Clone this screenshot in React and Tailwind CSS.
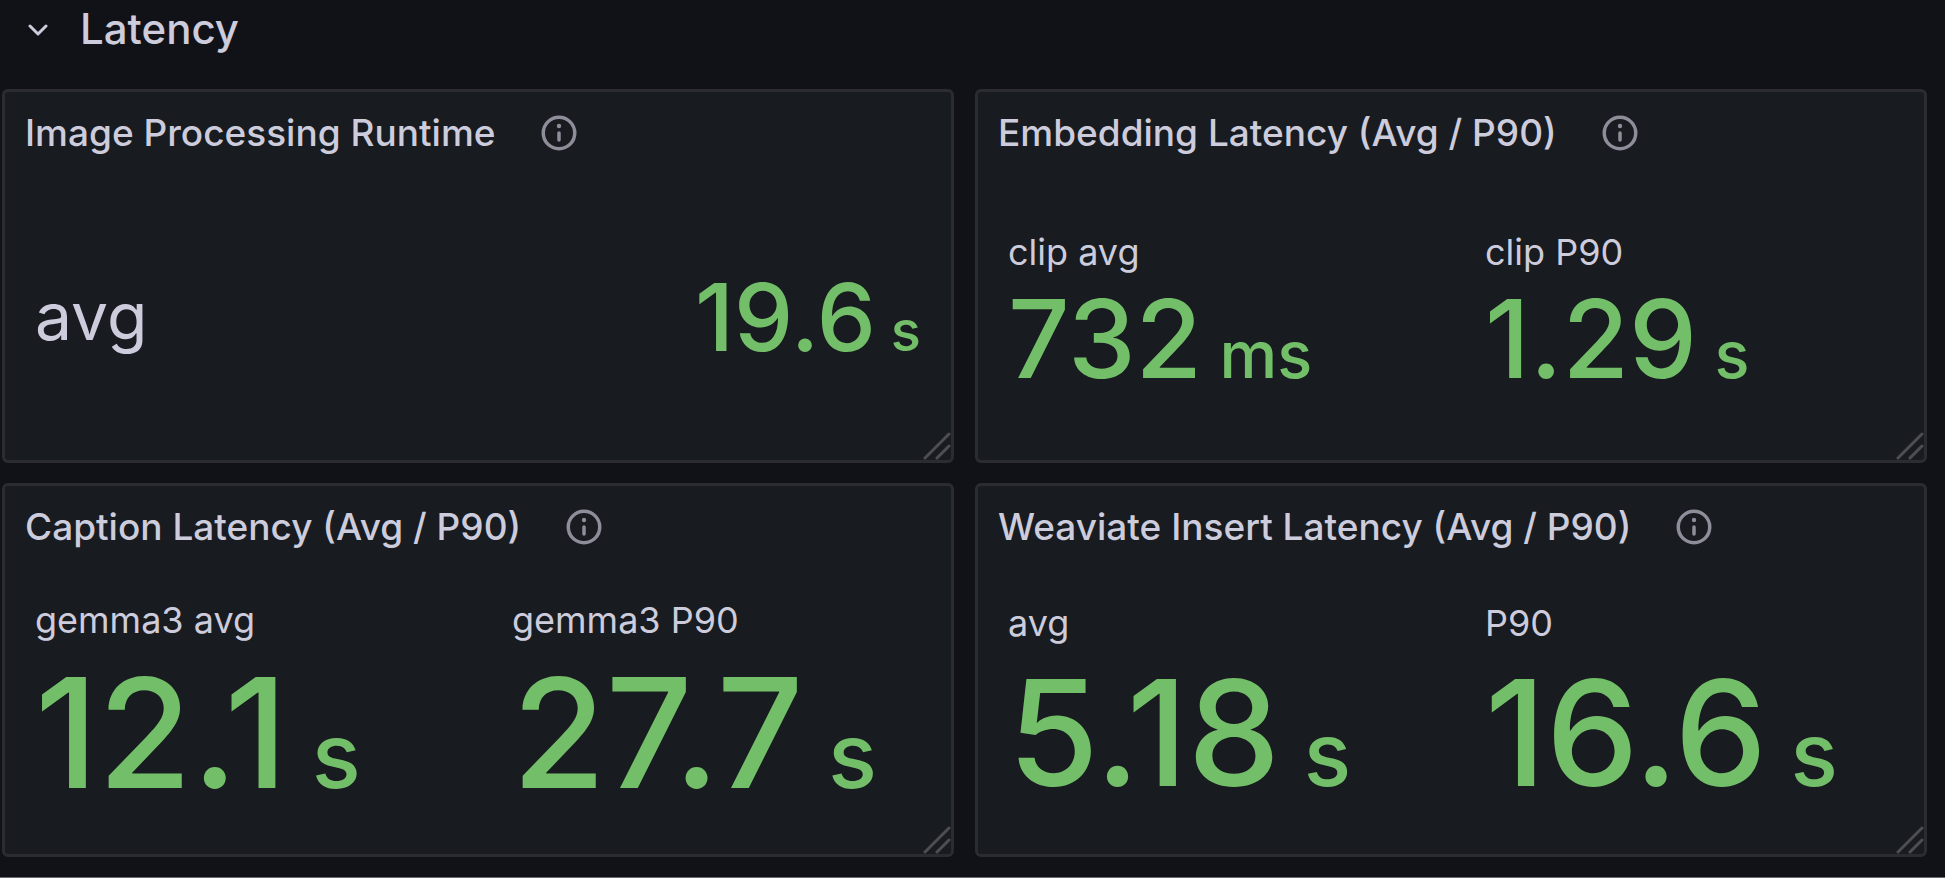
import React, { useState } from 'react'

const panels = [
    {
        title: "Image Processing Runtime",
        layout: "wide",
        stats: [{ label: "avg", value: "19.6", unit: "s" }],
    },
    {
        title: "Embedding Latency (Avg / P90)",
        valueSize: "text-[108px]",
        unitSize: "text-[65px]",
        stats: [
            { label: "clip avg", value: "732", unit: "ms" },
            { label: "clip P90", value: "1.29", unit: "s" },
        ],
    },
    {
        title: "Caption Latency (Avg / P90)",
        valueSize: "text-[152px]",
        unitSize: "text-[91px]",
        stats: [
            { label: "gemma3 avg", value: "12.1", unit: "s" },
            { label: "gemma3 P90", value: "27.7", unit: "s" },
        ],
    },
    {
        title: "Weaviate Insert Latency (Avg / P90)",
        valueSize: "text-[147px]",
        unitSize: "text-[88px]",
        stats: [
            { label: "avg", value: "5.18", unit: "s" },
            { label: "P90", value: "16.6", unit: "s" },
        ],
    },
];

const InfoIcon = () => (
    <svg viewBox="0 0 24 24" className="size-[42px]" fill="none" aria-hidden="true">
        <circle cx="12" cy="12" r="9" stroke="currentColor" strokeWidth="2" />
        <circle cx="12" cy="8" r="1.25" fill="currentColor" />
        <path d="M12 12v4" stroke="currentColor" strokeWidth="2" strokeLinecap="round" />
    </svg>
);

const ResizeHandle = () => (
    <svg viewBox="0 0 28 28" className="absolute right-0 bottom-0 size-7" fill="none" aria-hidden="true">
        <path d="M2 26L26 2M14 26L26 14" stroke="#4d4e53" strokeWidth="3" strokeLinecap="round" />
    </svg>
);

const StatValue = ({ value, unit, valueSize, unitSize }) => (
    <p className={`font-medium leading-[1.2] whitespace-pre text-[#73bf69] ${valueSize}`}>
        {value}
        <span className={`leading-none ${unitSize}`}>{` ${unit}`}</span>
    </p>
);

const Panel = ({ panel }) => {
    return (
        <section className="relative flex h-[374px] flex-col rounded-md border-3 border-[#2b2c31] bg-[#181b1f]">
            <header className="flex h-[82px] shrink-0 items-center gap-[42px] px-5">
                <h2 className="text-[37px] leading-[44px] font-medium whitespace-nowrap">{panel.title}</h2>
                <button type="button" aria-label={`About ${panel.title}`} className="text-[#8e8e9a]">
                    <InfoIcon />
                </button>
            </header>

            {panel.layout === "wide" ? (
                <div className="flex flex-1 items-center justify-between px-[30px]">
                    <p className="text-[66px] leading-[1.2]">{panel.stats[0].label}</p>
                    <StatValue {...panel.stats[0]} valueSize="text-[94px]" unitSize="text-[56px]" />
                </div>
            ) : (
                <div className="grid flex-1 grid-cols-2 content-center gap-x-[68px] px-[30px]">
                    {panel.stats.map((stat) => (
                        <div key={stat.label}>
                            <p className="text-[36px] leading-[44px]">{stat.label}</p>
                            <StatValue {...stat} valueSize={panel.valueSize} unitSize={panel.unitSize} />
                        </div>
                    ))}
                </div>
            )}
            <ResizeHandle />
        </section>
    );
};

const App = () => {
    const [open, setOpen] = useState(true);

    return (
        <main className="flex min-h-screen flex-col border-b border-[#6b6a70] bg-[#111217] font-[Inter,sans-serif] text-[#ccccdc]">
            <button
                type="button"
                aria-expanded={open}
                onClick={() => setOpen(!open)}
                className="mb-8 flex h-[57px] items-center gap-8 self-start pl-7 text-[42px] font-medium"
            >
                <svg viewBox="0 0 20 14" className={`h-[14px] w-5 ${open ? "" : "-rotate-90"}`} fill="none" aria-hidden="true">
                    <path d="M2 4L10 12L18 4" stroke="currentColor" strokeWidth="3" strokeLinecap="round" strokeLinejoin="round" />
                </svg>
                <span>Latency</span>
            </button>

            {open && (
                <div className="grid grid-cols-2 gap-x-[21px] gap-y-5 pr-[18px] pl-[2px]">
                    {panels.map((panel) => (
                        <Panel key={panel.title} panel={panel} />
                    ))}
                </div>
            )}
        </main>
    );
}

export default App;
